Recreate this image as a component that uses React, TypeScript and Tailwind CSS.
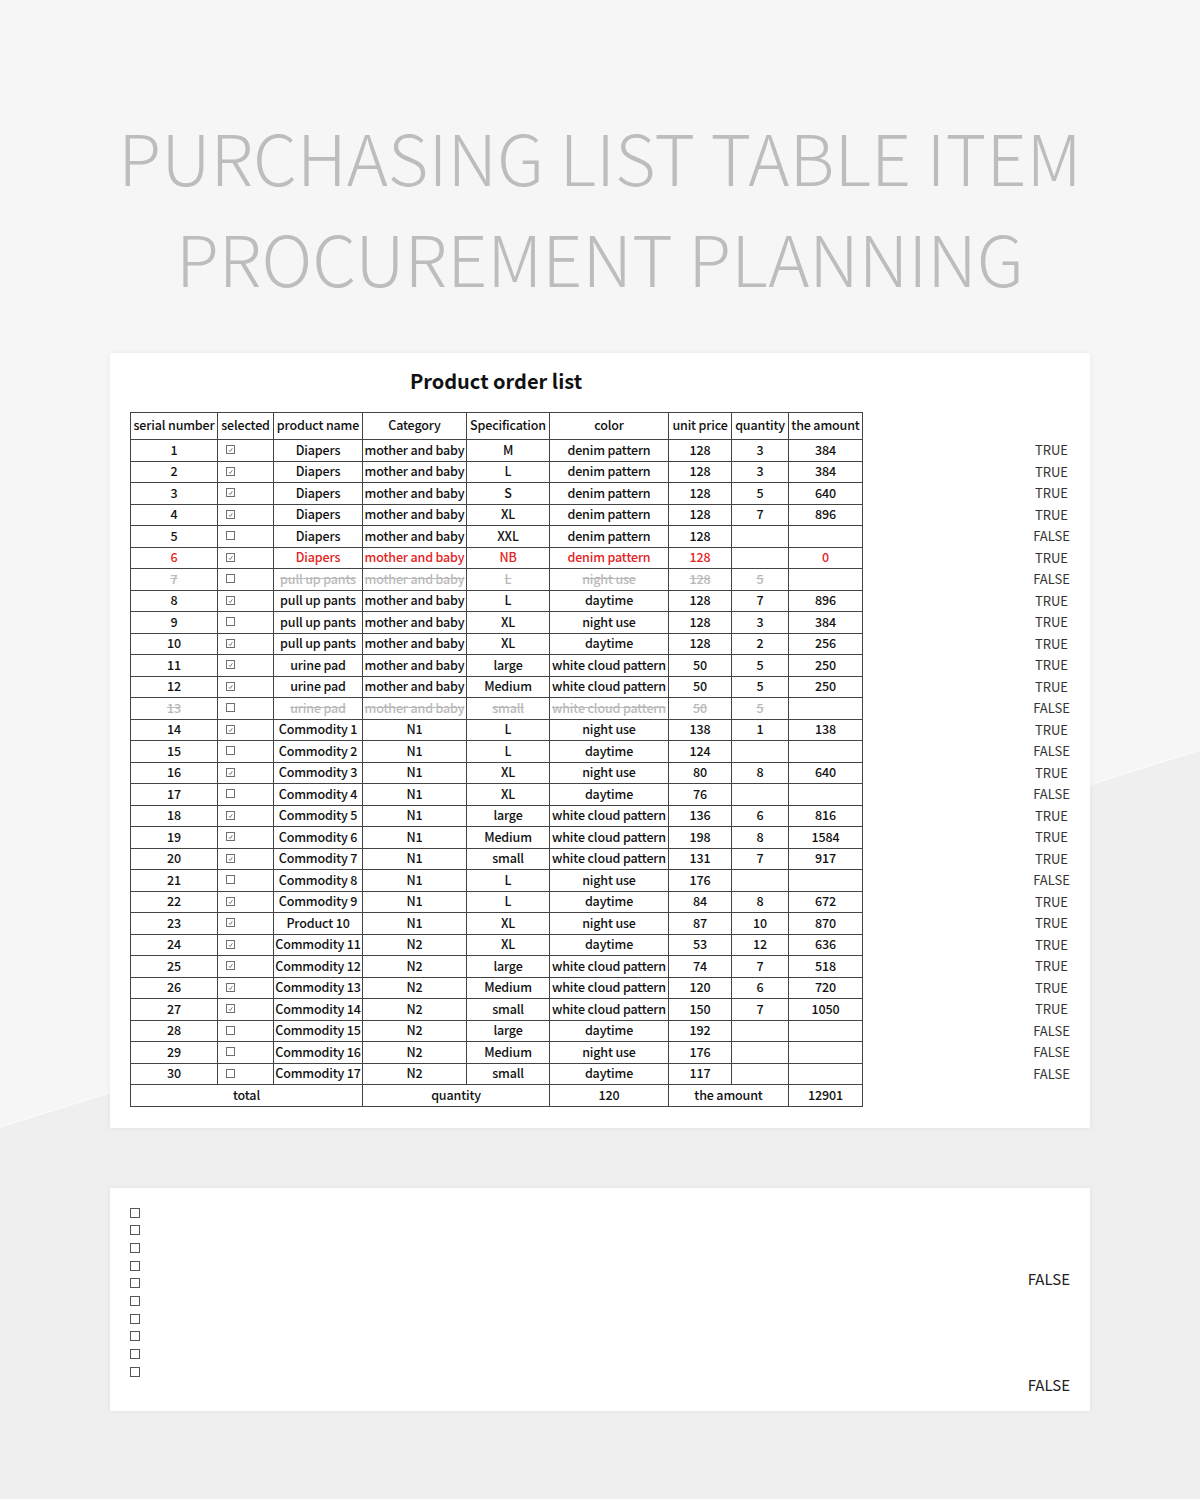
import React from 'react';

type Row = {
  n: number;
  sel: boolean;
  name: string;
  cat: string;
  spec: string;
  color: string;
  price: string;
  qty: string;
  amount: string;
  flag: 'TRUE' | 'FALSE';
  tone?: 'red' | 'strike';
};

const MB = 'mother and baby';
const WCP = 'white cloud pattern';

const rows: Row[] = [
  { n: 1, sel: true, name: 'Diapers', cat: MB, spec: 'M', color: 'denim pattern', price: '128', qty: '3', amount: '384', flag: 'TRUE' },
  { n: 2, sel: true, name: 'Diapers', cat: MB, spec: 'L', color: 'denim pattern', price: '128', qty: '3', amount: '384', flag: 'TRUE' },
  { n: 3, sel: true, name: 'Diapers', cat: MB, spec: 'S', color: 'denim pattern', price: '128', qty: '5', amount: '640', flag: 'TRUE' },
  { n: 4, sel: true, name: 'Diapers', cat: MB, spec: 'XL', color: 'denim pattern', price: '128', qty: '7', amount: '896', flag: 'TRUE' },
  { n: 5, sel: false, name: 'Diapers', cat: MB, spec: 'XXL', color: 'denim pattern', price: '128', qty: '', amount: '', flag: 'FALSE' },
  { n: 6, sel: true, name: 'Diapers', cat: MB, spec: 'NB', color: 'denim pattern', price: '128', qty: '', amount: '0', flag: 'TRUE', tone: 'red' },
  { n: 7, sel: false, name: 'pull up pants', cat: MB, spec: 'L', color: 'night use', price: '128', qty: '5', amount: '', flag: 'FALSE', tone: 'strike' },
  { n: 8, sel: true, name: 'pull up pants', cat: MB, spec: 'L', color: 'daytime', price: '128', qty: '7', amount: '896', flag: 'TRUE' },
  { n: 9, sel: false, name: 'pull up pants', cat: MB, spec: 'XL', color: 'night use', price: '128', qty: '3', amount: '384', flag: 'TRUE' },
  { n: 10, sel: true, name: 'pull up pants', cat: MB, spec: 'XL', color: 'daytime', price: '128', qty: '2', amount: '256', flag: 'TRUE' },
  { n: 11, sel: true, name: 'urine pad', cat: MB, spec: 'large', color: WCP, price: '50', qty: '5', amount: '250', flag: 'TRUE' },
  { n: 12, sel: true, name: 'urine pad', cat: MB, spec: 'Medium', color: WCP, price: '50', qty: '5', amount: '250', flag: 'TRUE' },
  { n: 13, sel: false, name: 'urine pad', cat: MB, spec: 'small', color: WCP, price: '50', qty: '5', amount: '', flag: 'FALSE', tone: 'strike' },
  { n: 14, sel: true, name: 'Commodity 1', cat: 'N1', spec: 'L', color: 'night use', price: '138', qty: '1', amount: '138', flag: 'TRUE' },
  { n: 15, sel: false, name: 'Commodity 2', cat: 'N1', spec: 'L', color: 'daytime', price: '124', qty: '', amount: '', flag: 'FALSE' },
  { n: 16, sel: true, name: 'Commodity 3', cat: 'N1', spec: 'XL', color: 'night use', price: '80', qty: '8', amount: '640', flag: 'TRUE' },
  { n: 17, sel: false, name: 'Commodity 4', cat: 'N1', spec: 'XL', color: 'daytime', price: '76', qty: '', amount: '', flag: 'FALSE' },
  { n: 18, sel: true, name: 'Commodity 5', cat: 'N1', spec: 'large', color: WCP, price: '136', qty: '6', amount: '816', flag: 'TRUE' },
  { n: 19, sel: true, name: 'Commodity 6', cat: 'N1', spec: 'Medium', color: WCP, price: '198', qty: '8', amount: '1584', flag: 'TRUE' },
  { n: 20, sel: true, name: 'Commodity 7', cat: 'N1', spec: 'small', color: WCP, price: '131', qty: '7', amount: '917', flag: 'TRUE' },
  { n: 21, sel: false, name: 'Commodity 8', cat: 'N1', spec: 'L', color: 'night use', price: '176', qty: '', amount: '', flag: 'FALSE' },
  { n: 22, sel: true, name: 'Commodity 9', cat: 'N1', spec: 'L', color: 'daytime', price: '84', qty: '8', amount: '672', flag: 'TRUE' },
  { n: 23, sel: true, name: 'Product 10', cat: 'N1', spec: 'XL', color: 'night use', price: '87', qty: '10', amount: '870', flag: 'TRUE' },
  { n: 24, sel: true, name: 'Commodity 11', cat: 'N2', spec: 'XL', color: 'daytime', price: '53', qty: '12', amount: '636', flag: 'TRUE' },
  { n: 25, sel: true, name: 'Commodity 12', cat: 'N2', spec: 'large', color: WCP, price: '74', qty: '7', amount: '518', flag: 'TRUE' },
  { n: 26, sel: true, name: 'Commodity 13', cat: 'N2', spec: 'Medium', color: WCP, price: '120', qty: '6', amount: '720', flag: 'TRUE' },
  { n: 27, sel: true, name: 'Commodity 14', cat: 'N2', spec: 'small', color: WCP, price: '150', qty: '7', amount: '1050', flag: 'TRUE' },
  { n: 28, sel: false, name: 'Commodity 15', cat: 'N2', spec: 'large', color: 'daytime', price: '192', qty: '', amount: '', flag: 'FALSE' },
  { n: 29, sel: false, name: 'Commodity 16', cat: 'N2', spec: 'Medium', color: 'night use', price: '176', qty: '', amount: '', flag: 'FALSE' },
  { n: 30, sel: false, name: 'Commodity 17', cat: 'N2', spec: 'small', color: 'daytime', price: '117', qty: '', amount: '', flag: 'FALSE' },
];

const headers = ['serial number', 'selected', 'product name', 'Category', 'Specification', 'color', 'unit price', 'quantity', 'the amount'];
const widths = [87, 56, 89, 104, 83, 119, 63, 57, 74];

function Box({ checked }: { checked: boolean }) {
  return (
    <svg width="9" height="9" viewBox="0 0 9 9" className="ml-[8px] block">
      <rect x="0.5" y="0.5" width="8" height="8" fill="none" stroke="#6f6f6f" strokeWidth="1" />
      {checked && <path d="M3 5.2 L4.2 6.5 L6.4 3.2" fill="none" stroke="#6f6f6f" strokeWidth="0.9" />}
    </svg>
  );
}

const cell = 'border border-[#444] px-0 pb-[1px] text-center whitespace-nowrap';

export default function App() {
  return (
    <div className="relative min-h-[1499px] w-full overflow-hidden bg-[#f6f6f6] font-['Noto_Sans_CJK_SC','Noto_Sans',sans-serif]">
      {/* background diagonal */}
      <svg className="absolute inset-0" width="1200" height="1499" viewBox="0 0 1200 1499">
        <polygon points="0,1127 1200,750 1200,1499 0,1499" fill="#efefef" />
        <line x1="0" y1="1127" x2="1200" y2="750" stroke="#fafafa" strokeWidth="1.5" />
      </svg>

      <div className="relative">
        {/* Title */}
        <h1 className="pt-[105px] text-center text-[70px] font-light leading-[101px] text-[#bdbdbd]">
          PURCHASING LIST TABLE ITEM
          <br />
          PROCUREMENT PLANNING
        </h1>

        {/* Order list card */}
        <div className="mx-[110px] mt-[46px] bg-white px-[20px] pt-[14px] pb-[21px] shadow-[0_0_6px_rgba(0,0,0,0.06)]">
          <div className="flex">
            <div className="w-[732px]">
              <h2 className="mb-[17px] text-center text-[20px] font-bold leading-[28px] text-[#111]">Product order list</h2>
              <table className="w-[732px] table-fixed border-collapse text-[12.5px] font-medium tracking-[-0.15px] text-[#111]">
                <colgroup>
                  {widths.map((w, i) => (
                    <col key={i} style={{ width: w }} />
                  ))}
                </colgroup>
                <thead>
                  <tr className="h-[27px]">
                    {headers.map((h) => (
                      <th key={h} className={cell + ' font-medium'}>
                        {h}
                      </th>
                    ))}
                  </tr>
                </thead>
                <tbody>
                  {rows.map((r) => {
                    const tone =
                      r.tone === 'red'
                        ? 'text-[#e5231f]'
                        : r.tone === 'strike'
                        ? 'text-[#b9b9b9] line-through'
                        : '';
                    return (
                      <tr key={r.n} className={'h-[21.5px] leading-none ' + tone}>
                        <td className={cell}>{r.n}</td>
                        <td className={cell}>
                          <Box checked={r.sel} />
                        </td>
                        <td className={cell}>{r.name}</td>
                        <td className={cell}>{r.cat}</td>
                        <td className={cell}>{r.spec}</td>
                        <td className={cell}>{r.color}</td>
                        <td className={cell}>{r.price}</td>
                        <td className={cell}>{r.qty}</td>
                        <td className={cell}>{r.amount}</td>
                      </tr>
                    );
                  })}
                  <tr className="h-[21.5px] leading-none">
                    <td className={cell} colSpan={3}>total</td>
                    <td className={cell} colSpan={2}>quantity</td>
                    <td className={cell}>120</td>
                    <td className={cell} colSpan={2}>the amount</td>
                    <td className={cell}>12901</td>
                  </tr>
                </tbody>
              </table>
            </div>

            {/* TRUE / FALSE helper column */}
            <div className="ml-[171px] w-[60px] pt-[72px] text-center text-[13px] text-[#333]">
              {rows.map((r) => (
                <div key={r.n} className="flex h-[21.5px] items-center justify-center">
                  {r.flag}
                </div>
              ))}
            </div>
          </div>
        </div>

        {/* Second card */}
        <div className="mx-[110px] mt-[60px] flex h-[223px] justify-between bg-white pl-[20px] pr-[20px] shadow-[0_0_6px_rgba(0,0,0,0.06)]">
          <div className="flex flex-col gap-[7.7px] pt-[20px]">
            {Array.from({ length: 10 }).map((_, i) => (
              <div key={i} className="h-[10px] w-[10px] border border-[#555]" />
            ))}
          </div>
          <div className="flex flex-col pt-[81px] text-[15px] leading-[20px] text-[#222]">
            <span>FALSE</span>
            <span className="mt-[86px]">FALSE</span>
          </div>
        </div>
      </div>
    </div>
  );
}
